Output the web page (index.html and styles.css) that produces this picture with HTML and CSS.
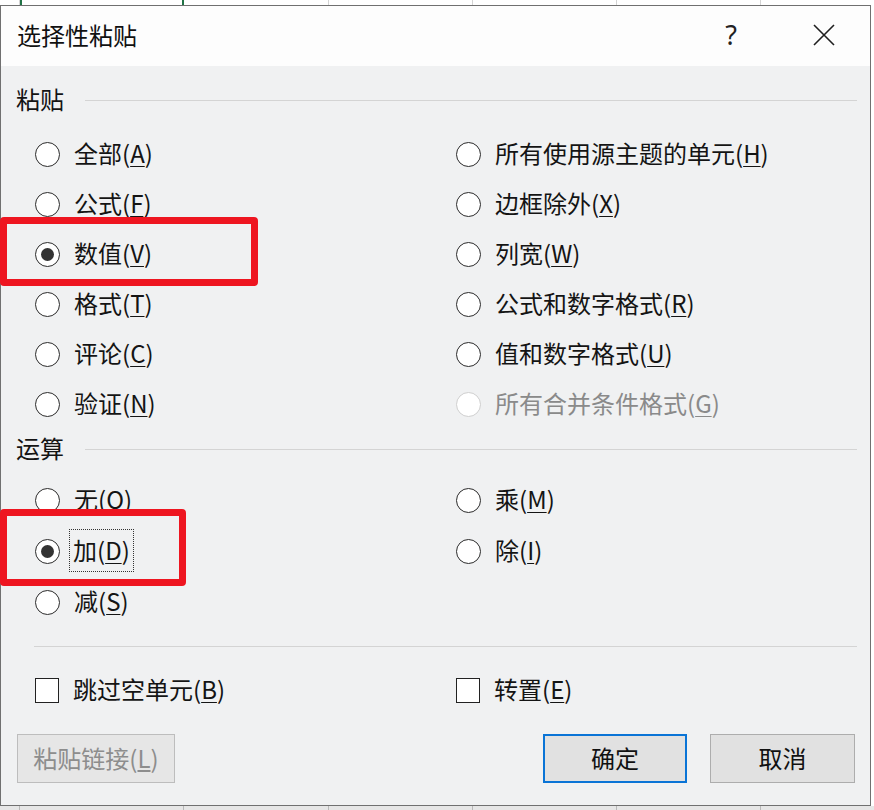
FILE: index.html
```html
<!DOCTYPE html>
<html lang="zh-CN">
<head>
  <meta charset="UTF-8">
  <meta name="viewport" content="width=device-width, initial-scale=1.0">
  <title>选择性粘贴</title>
  <link rel="stylesheet" href="styles.css">
</head>
<body>

<div class="sheet sheet-top">
  <span class="cell c0"></span>
  <span class="cell c1 selected"></span>
  <span class="cell c2"></span>
  <span class="cell"></span>
  <span class="cell"></span>
  <span class="cell"></span>
  <span class="cell"></span>
</div>

<div class="dialog">
  <div class="titlebar">
    <span class="title">选择性粘贴</span>
    <span class="help">?</span>
    <span class="close">
      <svg width="22" height="22" viewBox="0 0 22 22">
        <path d="M1 1 L21 21 M21 1 L1 21" stroke="#1f1f1f" stroke-width="1.6" fill="none"/>
      </svg>
    </span>
  </div>

  <div class="content">
    <div class="group-head">
      <span>粘贴</span>
      <i class="rule"></i>
    </div>

    <div class="options paste">
      <label class="option"><span class="radio"></span><span class="text">全部(<u>A</u>)</span></label>
      <label class="option"><span class="radio"></span><span class="text">公式(<u>F</u>)</span></label>
      <label class="option"><span class="radio checked"></span><span class="text">数值(<u>V</u>)</span></label>
      <label class="option"><span class="radio"></span><span class="text">格式(<u>T</u>)</span></label>
      <label class="option"><span class="radio"></span><span class="text">评论(<u>C</u>)</span></label>
      <label class="option"><span class="radio"></span><span class="text">验证(<u>N</u>)</span></label>
      <label class="option"><span class="radio"></span><span class="text">所有使用源主题的单元(<u>H</u>)</span></label>
      <label class="option"><span class="radio"></span><span class="text">边框除外(<u>X</u>)</span></label>
      <label class="option"><span class="radio"></span><span class="text">列宽(<u>W</u>)</span></label>
      <label class="option"><span class="radio"></span><span class="text">公式和数字格式(<u>R</u>)</span></label>
      <label class="option"><span class="radio"></span><span class="text">值和数字格式(<u>U</u>)</span></label>
      <label class="option disabled"><span class="radio"></span><span class="text">所有合并条件格式(<u>G</u>)</span></label>
    </div>

    <div class="group-head">
      <span>运算</span>
      <i class="rule"></i>
    </div>

    <div class="options ops">
      <label class="option"><span class="radio"></span><span class="text">无(<u>O</u>)</span></label>
      <label class="option"><span class="radio checked"></span><span class="text focus">加(<u>D</u>)</span></label>
      <label class="option"><span class="radio"></span><span class="text">减(<u>S</u>)</span></label>
      <label class="option"><span class="radio"></span><span class="text">乘(<u>M</u>)</span></label>
      <label class="option"><span class="radio"></span><span class="text">除(<u>I</u>)</span></label>
    </div>

    <div class="separator"></div>

    <div class="options checks">
      <label class="option"><span class="checkbox"></span><span class="text">跳过空单元(<u>B</u>)</span></label>
      <label class="option"><span class="checkbox"></span><span class="text">转置(<u>E</u>)</span></label>
    </div>

    <div class="buttons">
      <button class="btn link" disabled>粘贴链接(<u>L</u>)</button>
      <button class="btn ok">确定</button>
      <button class="btn cancel">取消</button>
    </div>
  </div>
</div>

<div class="sheet sheet-bottom">
  <span class="cell c0"></span>
  <span class="cell c1"></span>
  <span class="cell c2"></span>
  <span class="cell"></span>
  <span class="cell"></span>
  <span class="cell"></span>
  <span class="cell"></span>
</div>

<!-- red highlight marks drawn over the screenshot -->
<div class="mark mark-values"></div>
<div class="mark mark-add"></div>

</body>
</html>
```

FILE: styles.css
```css
body {
  margin: 0;
  background: #ffffff;
  font-family: "Noto Sans CJK SC", "Noto Sans", sans-serif;
  color: #141414;
  overflow: hidden;
}
.sheet {
  display: flex;
  height: 5px;
  background: #ffffff;
}
.sheet .cell {
  width: 144px;
  flex: none;
  box-sizing: border-box;
  border-right: 1px solid #d4d4d4;
}
.sheet .c0 {
  width: 20px;
}
.sheet .c1 {
  width: 164px;
}
.sheet .c2 {
  width: 145px;
}
.sheet-top .selected {
  border-left: 2px solid #217346;
  border-right: 2px solid #217346;
}
.sheet-bottom {
  height: 4px;
  background: #e6e6e6;
}
.sheet-bottom .cell {
  border-right-color: #b9b9b9;
}
.dialog {
  width: 871px;
  height: 801px;
  box-sizing: border-box;
  border: 1px solid #707070;
  background: #f0f1f2;
  display: flex;
  flex-direction: column;
}
.titlebar {
  height: 60px;
  flex: none;
  background: #fdfdfd;
  display: flex;
  align-items: center;
  padding-left: 16px;
  padding-bottom: 3px;
  box-sizing: border-box;
}
.title {
  font-size: 24px;
  line-height: 34px;
  color: #111;
  flex: 1;
}
.help {
  font-family: "Noto Sans", sans-serif;
  font-size: 27px;
  color: #222;
  margin-right: 76px;
}
.close {
  display: flex;
  margin-right: 35px;
}
.content {
  padding: 14px 13px 0 14px;
  font-size: 24px;
  line-height: 34px;
}
.group-head {
  height: 40px;
  display: flex;
  align-items: center;
  padding-left: 1px;
}
.group-head span {
  margin-top: -2px;
}
.group-head .rule {
  flex: 1;
  height: 1px;
  background: #d4d4d4;
  margin-left: 21px;
}
.options {
  display: grid;
  grid-template-columns: 421px 1fr;
  grid-auto-flow: column;
  padding-left: 20px;
}
.paste {
  grid-template-rows: repeat(6, 50px);
  margin-top: 9px;
}
.ops {
  grid-template-rows: repeat(3, 51px);
  margin-top: 6px;
}
.checks {
  grid-template-rows: 40px;
  margin-top: 23px;
}
.option {
  display: flex;
  align-items: center;
  gap: 15px;
  white-space: nowrap;
}
.option .text {
  margin-left: -1px;
  margin-top: -3px;
}
.option u {
  text-decoration-thickness: 1px;
  text-underline-offset: 3px;
}
.radio {
  width: 25px;
  height: 25px;
  box-sizing: border-box;
  border: 1.6px solid #2b2b2b;
  border-radius: 50%;
  background: #fff;
  display: flex;
  align-items: center;
  justify-content: center;
  flex: none;
}
.radio.checked::after {
  content: "";
  width: 13px;
  height: 13px;
  border-radius: 50%;
  background: #333;
}
.option.disabled {
  color: #8a8a8a;
}
.option.disabled .radio {
  border-color: #cfcfcf;
}
.option .focus {
  margin-left: -6px;
  padding: 3px 3px 4px;
  border: 1px dotted #333;
}
.checkbox {
  width: 24px;
  height: 25px;
  box-sizing: border-box;
  border: 1.6px solid #222;
  background: #fff;
  flex: none;
}
.separator {
  height: 1px;
  background: #d4d4d4;
  margin: 18px 0 0 19px;
}
.buttons {
  display: flex;
  margin-top: 24px;
  padding: 0 2px 0 2px;
}
.btn {
  height: 49px;
  box-sizing: border-box;
  font-family: inherit;
  font-size: 24px;
  color: #111;
  background: #e1e1e1;
  border: 1px solid #adadad;
  padding: 0 0 3px;
}
.btn.link {
  width: 158px;
  color: #8d8d8d;
  background: #e6e6e6;
  border-color: #bdbdbd;
}
.btn.ok {
  width: 144px;
  margin-left: auto;
  border: 2px solid #0a74d6;
}
.btn.cancel {
  width: 145px;
  margin-left: 23px;
}
.mark {
  position: absolute;
  box-sizing: border-box;
  border: 7px solid #ee1520;
  border-radius: 4px;
}
.mark-values {
  left: 0;
  top: 217px;
  width: 258px;
  height: 69px;
}
.mark-add {
  left: 0;
  top: 509px;
  width: 186px;
  height: 77px;
}
```
